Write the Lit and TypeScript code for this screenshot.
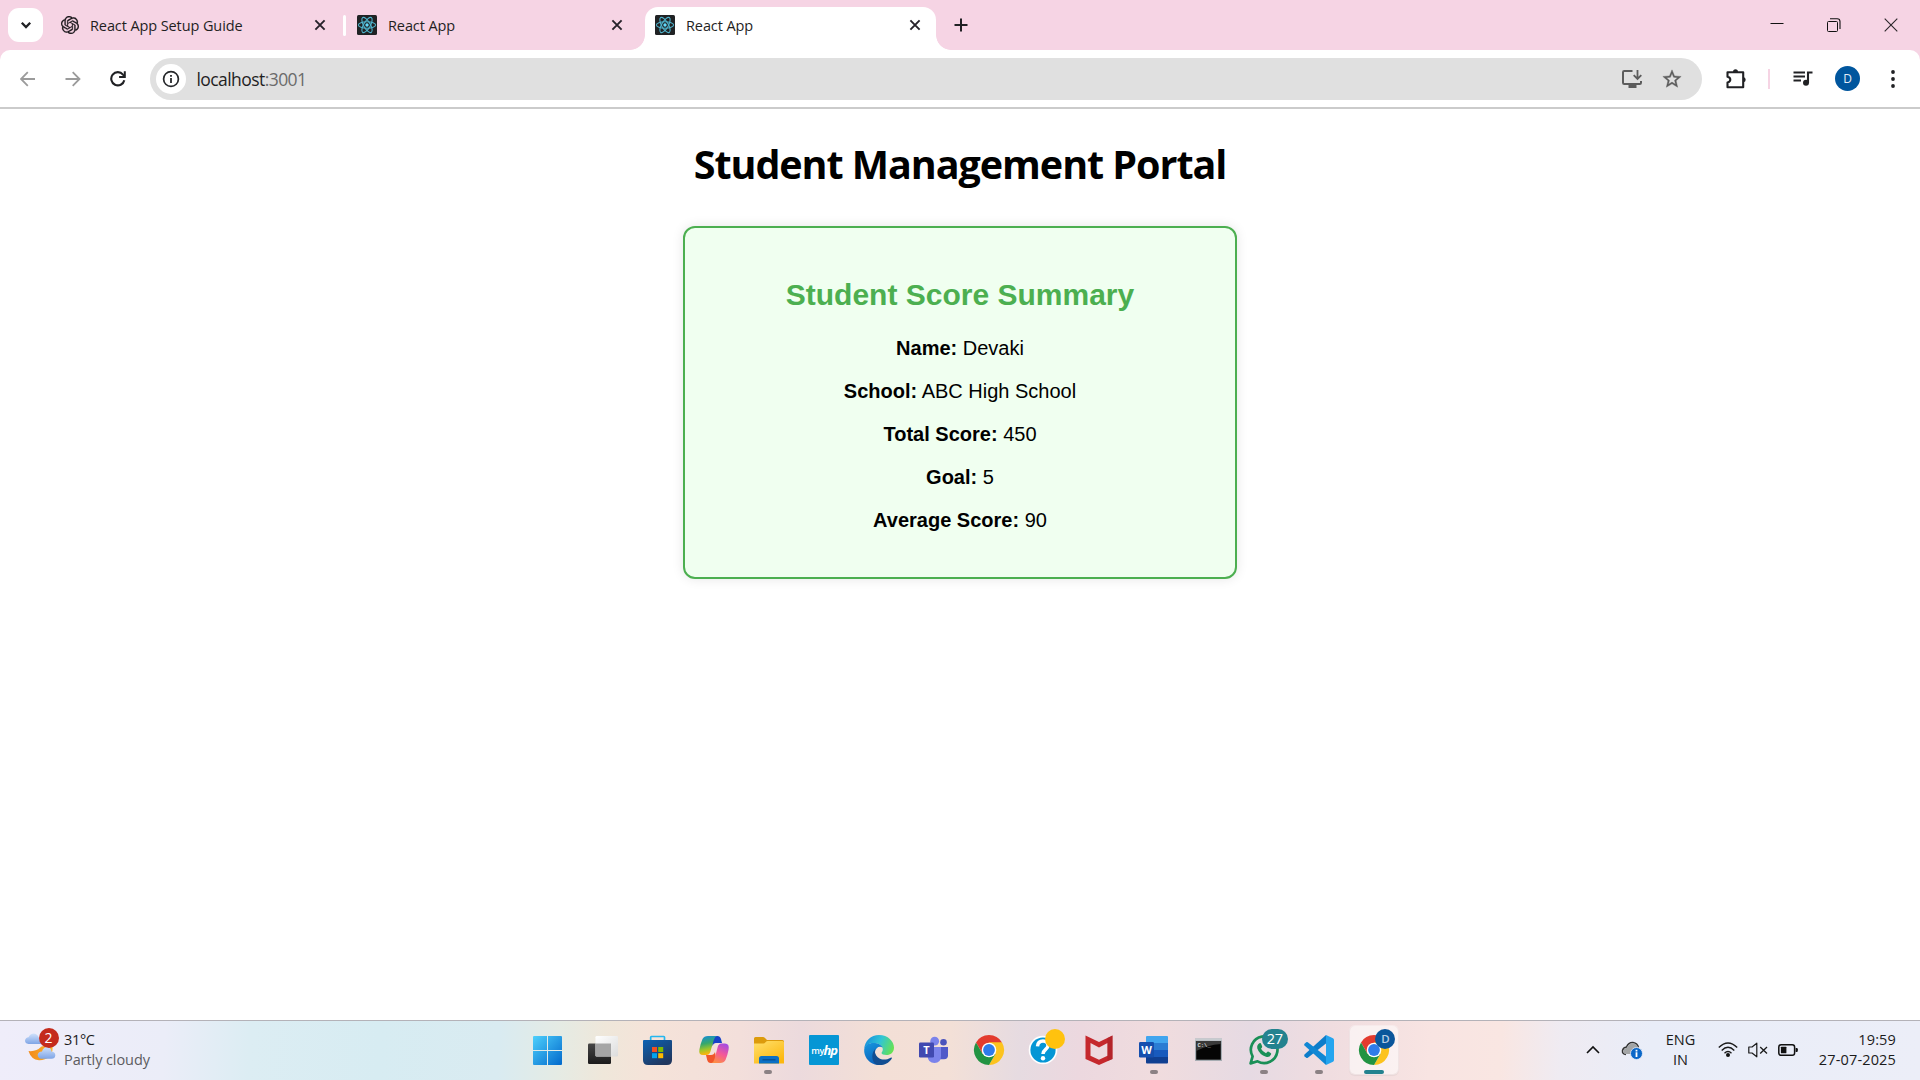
import { LitElement, html, svg, css, type TemplateResult } from "lit";
import { customElement } from "lit/decorators.js";
import { classMap } from "lit/directives/class-map.js";

const box = (size: number, body: TemplateResult, view = `0 0 ${size} ${size}`) =>
  html`<svg width=${size} height=${size} viewBox=${view} fill="none">${body}</svg>`;

/* ---------- browser icons ---------- */
const closeIcon = box(12, svg`<path d="M1.4 1.4 10.6 10.6M10.6 1.4 1.4 10.6" stroke="#26222a" stroke-width="1.9"/>`);

const gptIcon = box(18, svg`<path fill="#1c191d" stroke="#1c191d" stroke-width=".3" d="M22.2819 9.8211a5.9847 5.9847 0 0 0-.5157-4.9108 6.0462 6.0462 0 0 0-6.5098-2.9A6.0651 6.0651 0 0 0 4.9807 4.1818a5.9847 5.9847 0 0 0-3.9977 2.9 6.0462 6.0462 0 0 0 .7427 7.0966 5.98 5.98 0 0 0 .511 4.9107 6.051 6.051 0 0 0 6.5146 2.9001A5.9847 5.9847 0 0 0 13.2599 24a6.0557 6.0557 0 0 0 5.7718-4.2058 5.9894 5.9894 0 0 0 3.9977-2.9001 6.0557 6.0557 0 0 0-.7475-7.0729zm-9.022 12.6081a4.4755 4.4755 0 0 1-2.8764-1.0408l.1419-.0804 4.7783-2.7582a.7948.7948 0 0 0 .3927-.6813v-6.7369l2.02 1.1686a.071.071 0 0 1 .038.052v5.5826a4.504 4.504 0 0 1-4.4945 4.4944zm-9.6607-4.1254a4.4708 4.4708 0 0 1-.5346-3.0137l.142.0852 4.783 2.7582a.7712.7712 0 0 0 .7806 0l5.8428-3.3685v2.3324a.0804.0804 0 0 1-.0332.0615L9.74 19.9502a4.4992 4.4992 0 0 1-6.1408-1.6464zM2.3408 7.8956a4.485 4.485 0 0 1 2.3655-1.9728V11.6a.7664.7664 0 0 0 .3879.6765l5.8144 3.3543-2.0201 1.1685a.0757.0757 0 0 1-.071 0l-4.8303-2.7865A4.504 4.504 0 0 1 2.3408 7.872zm16.5963 3.8558L13.1038 8.364 15.1192 7.2a.0757.0757 0 0 1 .071 0l4.8303 2.7913a4.4944 4.4944 0 0 1-.6765 8.1042v-5.6772a.79.79 0 0 0-.407-.667zm2.0107-3.0231l-.142-.0852-4.7735-2.7818a.7759.7759 0 0 0-.7854 0L9.409 9.2297V6.8974a.0662.0662 0 0 1 .0284-.0615l4.8303-2.7866a4.4992 4.4992 0 0 1 6.6802 4.66zM8.3065 12.863l-2.02-1.1638a.0804.0804 0 0 1-.038-.0567V6.0742a4.4992 4.4992 0 0 1 7.3757-3.4537l-.142.0805L8.704 5.459a.7948.7948 0 0 0-.3927.6813zm1.0976-2.3654l2.602-1.4998 2.6069 1.4998v2.9994l-2.5974 1.4997-2.6067-1.4997Z"/>`, "0 0 24 24");

const reactIcon = box(20, svg`<rect width="20" height="20" rx="1.5" fill="#202224"/>
  <g stroke="#4fb4cd" stroke-width="1.1"><ellipse cx="10" cy="10" rx="8.6" ry="3.3"/>
  <ellipse cx="10" cy="10" rx="8.6" ry="3.3" transform="rotate(60 10 10)"/>
  <ellipse cx="10" cy="10" rx="8.6" ry="3.3" transform="rotate(120 10 10)"/></g><circle cx="10" cy="10" r="1.7" fill="#61dafb"/>`);

const chevron = box(12, svg`<path d="M1.8 3.8 6 8 10.2 3.8" stroke="#202124" stroke-width="2.3"/>`);
const plusIcon = box(14, svg`<path d="M7 .5V13.5M.5 7H13.5" stroke="#202124" stroke-width="2"/>`);
const minIcon = box(14, svg`<path d="M.5 5.5H13.5" stroke="#111" stroke-width="1"/>`);
const restoreIcon = box(14, svg`<rect x=".5" y="3.5" width="10" height="10" rx="1" stroke="#111"/><path d="M3 .8h7.2Q13 .8 13 3.6V11" stroke="#111" stroke-width="1.1"/>`);
const winClose = box(14, svg`<path d="M.7.7 13.3 13.3M13.3.7.7 13.3" stroke="#2a2529" stroke-width="1.1"/>`);

const backIcon = box(16, svg`<path d="M15 8H1.500M7.800 1.200 1 8l6.800 6.800" stroke="#9b9b9b" stroke-width="1.8"/>`);
const fwdIcon = box(16, svg`<path d="M.5 8H14M7.7 1.2 14.5 8l-6.8 6.8" stroke="#9b9b9b" stroke-width="1.8"/>`);
const reloadIcon = box(16, svg`<path d="M14.3 9.2A6.6 6.6 0 1 1 13 3.6L14.6 5.4" stroke="#202124" stroke-width="2.1"/><path d="M15.8.3V7H9.1V5h4.7V.3Z" fill="#202124"/>`);
const infoIcon = box(18, svg`<circle cx="9" cy="9" r="7.4" stroke="#26282b" stroke-width="1.7"/><path d="M8.1 8H9.9V13H8.1ZM8.1 5H9.9V6.8H8.1Z" fill="#26282b"/>`);
const installIcon = box(22, svg`<path d="M11.5 3H3.2Q2 3 2 4.2V14.8Q2 16 3.2 16H18.8Q20 16 20 14.8V13" stroke="#5c5c5c" stroke-width="2"/><path d="M7.5 16.5h8V20h-8Z" fill="#5c5c5c"/><path d="M16.5 2v8.5M12.7 7.2l3.8 3.8 3.8-3.8" stroke="#5c5c5c" stroke-width="1.8"/>`);
const starIcon = box(22, svg`<path fill="#5c5c5c" stroke="#5c5c5c" stroke-width=".4" d="m22 9.24-7.19-.62L12 2 9.19 8.63 2 9.24l5.46 4.73L5.82 21 12 17.27 18.18 21l-1.63-7.03L22 9.24zM12 15.4l-3.76 2.27 1-4.28-3.32-2.88 4.38-.38L12 6.1l1.71 4.04 4.38.38-3.32 2.88 1 4.28L12 15.4z"/>`, "0 0 24 24");
const puzzleIcon = box(22, svg`<path d="M4 4.2H18.2V19.2H2.5V14.5Q5.3 14 5.3 11.6T2.5 8.7V4.2Z" stroke="#202124" stroke-width="2.1" stroke-linejoin="round"/><path d="M8 4a2.5 2.8 0 0 1 5 0ZM18.5 9a2.7 2.7 0 0 1 0 5.3Z" fill="#202124"/>`);
const musicIcon = box(20, svg`<path d="M.5 3.5H12M.5 7.5H12M.5 11.5H8" stroke="#202124" stroke-width="2"/><circle cx="13" cy="13.8" r="3" fill="#202124"/><path d="M15 14V3.5H19.5" stroke="#202124" stroke-width="2.1"/>`);
const dotsIcon = box(20, svg`<g fill="#202124"><circle cx="10" cy="3" r="1.9"/><circle cx="10" cy="10" r="1.9"/><circle cx="10" cy="17" r="1.9"/></g>`);

/* ---------- taskbar icons ---------- */
const chromeBody = svg`<path d="M2 7.5A15 15 0 0 1 28 7.5L15 12 8.5 18.75Z" fill="#e33b2e"/>
  <path d="M28 7.5A15 15 0 0 1 15 30L21.5 18.75 15 7.5Z" fill="#fcc31e"/>
  <path d="M15 30A15 15 0 0 1 2 7.5L8.5 18.75 21.5 18.75Z" fill="#229342"/>
  <path d="M15 7.5H28L20 12Z" fill="#fcc31e"/>
  <circle cx="15" cy="15" r="7.3" fill="#fff"/><circle cx="15" cy="15" r="5.9" fill="#2f7bea"/>`;

const windowsIcon = box(30, svg`<defs><linearGradient id="g" x1="0" y1="0" x2="30" y2="30" gradientUnits="userSpaceOnUse"><stop stop-color="#4fd2fd"/><stop offset="1" stop-color="#0067cb"/></linearGradient></defs>
  <path fill="url(#g)" d="M0 2Q0 1 1 1H14V15H0ZM15 1H28Q29 1 29 2V15H15ZM0 16H14V30H1Q0 30 0 29ZM15 16H29V29Q29 30 28 30H15Z"/>`);

const taskViewIcon = box(30, svg`<defs><linearGradient id="d" x2="0" y2="1"><stop stop-color="#464646"/><stop offset="1" stop-color="#1b1b1b"/></linearGradient><linearGradient id="l" x2="1" y2="1"><stop stop-color="#fff"/><stop offset="1" stop-color="#dcdcdc"/></linearGradient></defs>
  <rect x="0" y="8.5" width="23" height="20.5" rx="1.2" fill="url(#d)"/><rect x="7.5" y="1" width="22.5" height="20.5" rx="1.2" fill="url(#l)"/>
  <path d="M7.5 8.5H23V21.5H8.7Q7.5 21.5 7.5 20.3Z" fill="#a5a5a5"/>`);

const storeIcon = box(30, svg`<defs><linearGradient id="s" x2=".6" y2="1"><stop stop-color="#0b62b4"/><stop offset="1" stop-color="#20375f"/></linearGradient></defs>
  <path d="M7.7 6V2.2Q7.7 1.5 8.4 1.5H20.8Q21.5 1.5 21.5 2.2V6" stroke="#25b7f0" stroke-width="1.7"/>
  <path d="M0 6Q0 5 1 5H28Q29 5 29 6V25Q29 30 24 30H5Q0 30 0 25Z" fill="url(#s)"/>
  <path fill="#f25022" d="M9 12h5v5H9Z"/><path fill="#7fba00" d="M15.2 12h5v5h-5Z"/><path fill="#00a4ef" d="M9 18.2h5v5H9Z"/><path fill="#ffb900" d="M15.2 18.2h5v5h-5Z"/>`);

const copilotIcon = box(30, svg`<defs><linearGradient id="a" x2=".2" y2="1"><stop stop-color="#128be0"/><stop offset=".45" stop-color="#37a86b"/><stop offset=".75" stop-color="#9fc52a"/><stop offset="1" stop-color="#fcb40c"/></linearGradient>
  <linearGradient id="b" x1=".7" x2=".3" y2="1"><stop stop-color="#a64be0"/><stop offset=".5" stop-color="#f4589a"/><stop offset="1" stop-color="#fd8e45"/></linearGradient></defs>
  <path d="M12 1H18.5Q21 1 22 4L23 8H17Q14.5 8 13.5 11Z" fill="#1743c8"/>
  <path d="M18 28H11.5Q9 28 8.2 25L7 20H12Q15 20 16 17Z" fill="#f0562b"/>
  <path d="M9 1H18Q15.8 1.5 14.8 5L11.3 17Q10.3 20 7.5 20H4Q-.6 20 .4 14.5 1.5 8.5 3.5 4 5 1 9 1Z" fill="url(#a)"/>
  <path d="M21 28H12.5Q14.5 27.5 15.5 24L18.7 12Q19.5 8.5 22.5 8.5H26Q30.6 8.5 29.6 14.5 28.5 20.5 26.5 25 25 28 21 28Z" fill="url(#b)"/>`, "-1 0 30 30");

const folderIcon = box(30, svg`<defs><linearGradient id="f" x2=".7" y2="1"><stop stop-color="#ffe06d"/><stop offset="1" stop-color="#fcb80f"/></linearGradient></defs>
  <path d="M0 3.5Q0 2 1.5 2H9Q10 2 11 3L13 5H28.5Q30 5 30 6.5V12H0Z" fill="#dc9b0c"/>
  <path d="M0 8.5H9.5Q10.5 8.5 11.5 7.3 12.5 6 13.7 6H28.5Q30 6 30 7.5V28.5H0Z" fill="url(#f)"/>
  <path d="M5 28.5V23.5Q5 21 7.5 21H22.5Q25 21 25 23.5V28.5Z" fill="#0b70c5"/><path d="M8.5 24.8H21.5" stroke="#064b8c" stroke-width="1.2"/>`, "-1 0 30 30");

const hpIcon = box(30, svg`<rect width="30" height="30" rx="1" fill="#0596d5"/><text x="2.2" y="18.7" class="my">my</text><text x="14.5" y="19.5" class="hp">hp</text>`);

const edgeIcon = box(30, svg`<defs><linearGradient id="e1" x1="0" y1=".3" x2="1" y2=".6"><stop stop-color="#168fdd"/><stop offset=".5" stop-color="#31c5d5"/><stop offset="1" stop-color="#67e252"/></linearGradient>
  <linearGradient id="e2" x2=".4" y2="1"><stop stop-color="#1797df"/><stop offset="1" stop-color="#0b62bb"/></linearGradient></defs>
  <path d="M.2 14.5C.6 5.5 7 0 15 0 24 0 30 6.5 30 12.5 30 17.5 26.5 20 22.5 20 19.5 20 17.5 19 17.5 18 17.5 17.3 18.8 16.5 18.8 14.3 18.8 10.5 14.5 8 9.5 8 4.5 8 1 11 .2 14.5Z" fill="url(#e1)"/>
  <path d="M.2 14.5C1 10 4.5 8 9.5 8 14 8 17.5 10 18.5 12.5 15.5 10.5 11.5 12.5 11 17 10.5 22.5 15 27.5 20 28.8 17 30 14 30.3 11 29.5 4 27.5-.3 21 .2 14.5Z" fill="url(#e2)"/>
  <path d="M12.5 13C10.5 14.5 10.5 17 11.5 19 13.5 24 20 26.5 26.7 22.7 27.5 22.3 28.2 23 27.7 23.8 24 29.5 17.5 31 12 29.5 7.5 26.5 6.5 17 12.5 13Z" fill="#114e92"/>`);

const teamsIcon = box(30, svg`<circle cx="24.5" cy="7.3" r="3.3" fill="#4b53bc"/><path d="M20 12H29V20.5Q29 24.2 25 24.2H20Z" fill="#5059c9"/>
  <circle cx="15.7" cy="6.2" r="4.4" fill="#7b83eb"/><path d="M8.5 12H22V21Q22 28 15.5 28T8.5 21Z" fill="#7b83eb"/>
  <rect x="0" y="7.5" width="15" height="15" rx="1.3" fill="#4149b0"/><text x="7.5" y="19" class="t">T</text>`);

const chromeIcon = box(30, chromeBody);

const helpIcon = box(30, svg`<circle cx="14" cy="15" r="14.3" fill="#fff"/><circle cx="14" cy="15" r="12.6" fill="#0596d5"/><path d="M8.5 11.3Q9 6 14 6T19 10.5C19 14.5 14 14.3 14 19" stroke="#fff" stroke-width="3.5"/><circle cx="14" cy="23.2" r="2.2" fill="#fff"/>`);

const mcafeeIcon = box(30, svg`<path d="M1.5.5 15 7 28.5.5V24L15 30 1.5 24ZM6.5 8V20.7L15 24.7 23.5 20.7V8L15 12.5Z" fill="#c5282d" fill-rule="evenodd"/><path d="M23.5 3 28.5.5V24L23.5 26Z" fill="#a82228" opacity=".6"/>`);

const wordIcon = box(30, svg`<path d="M7 2Q7 1 8 1H28Q29 1 29 2V8H7Z" fill="#41a5ee"/><path d="M7 8H29V15H7Z" fill="#2b7cd3"/><path d="M7 15H29V22H7Z" fill="#185abd"/><path d="M7 22H29V27.5Q29 28.5 28 28.5H8Q7 28.5 7 27.5Z" fill="#103f91"/>
  <rect x="0" y="7" width="15" height="15.5" rx="1.3" fill="#154fae"/><text x="7.5" y="19" class="t">W</text>`);

const cmdIcon = box(30, svg`<rect x="1.5" y="3.5" width="27" height="22.5" fill="#a7adb3"/><rect x="2.7" y="6" width="24.6" height="18.7" fill="#050505"/><path d="M2.7 6H27.3V9Q14 10 2.7 16Z" fill="#3a3a3a"/><path d="M1.5 3.5H28.5V5.7H1.5Z" fill="#c7ccd0"/><text x="4" y="12" class="prompt">C:\\_</text>`, "0.5 0 30 30");

const whatsappIcon = box(30, svg`<path d="M1.6 28.4 3.6 21.3A13.3 13.3 0 1 1 8.6 26.3Z" stroke="#1a8f57" stroke-width="2.7" stroke-linejoin="round"/>
  <path d="M10.3 8.3Q11.6 7.5 12.2 9L13.2 11.5Q13.4 12.2 12 13.7 13.7 16.8 17 18.2 18.5 16.3 19.2 16.6L21.7 17.9Q22.5 18.4 21.9 19.8 20.5 22.7 17 21.8 10.5 19.7 8.3 13.5 7.6 10 10.3 8.3Z" fill="#1a8f57"/>`);

const codeIcon = box(30, svg`<path d="M22 0 .5 19.6Q-.2 20.4.5 21.2L2.2 22.7Q3 23.3 3.8 22.7L22 8.5Z" fill="#0d7dca"/>
  <path d="M22 30 .5 10.4Q-.2 9.6.5 8.8L2.2 7.3Q3 6.7 3.8 7.3L22 21.5Z" fill="#1087d4"/><path d="M22 0 29 3.2Q30 3.7 30 5V25Q30 26.3 29 26.8L22 30Z" fill="#25a5ef"/>`);

const weatherIcon = html`<svg width="32" height="30" viewBox="0 0 32 30" fill="none">
  <defs><linearGradient id="c" x2="0" y2="1"><stop stop-color="#cfe1fb"/><stop offset="1" stop-color="#7fa5e6"/></linearGradient><linearGradient id="m" x2="1" y2="0"><stop stop-color="#f28a1c"/><stop offset="1" stop-color="#fbb52b"/></linearGradient></defs>
  <path d="M3.5 16Q11 17 16.5 11.5L27 9.5Q29 17 24.5 21.5 20 25.5 14 25.3 6 24.500 3.5 16Z" fill="url(#m)"/>
  <path d="M3.5 9Q0 8.5 0 5.5.5 2.5 3.5 2.3 5-1.5 9-1.5 12.5-1 13.5 2L18 9Z" fill="url(#c)"/>
  <path d="M16 23.7Q12.5 23 12.7 19.5 13.5 16.5 17 16.5 18.5 11.5 22.5 12 26 12.5 26.5 16.5 30.5 17 30.3 20.5 30 23.7 26.5 23.7Z" fill="url(#c)"/></svg>`;

/* ---------- tray icons ---------- */
const upIcon = box(14, svg`<path d="M1 10 7 4l6 6" stroke="#111" stroke-width="1.6"/>`);
const cloudIcon = box(22, svg`<path d="M5 15.5Q1 15 1.5 11.5 2.2 8.5 5.5 8 7.5 3.2 12 3.5 16.5 4.2 17.5 8.5" stroke="#333" stroke-width="1.5"/><path d="M5 15Q2 14.5 2.2 11.5 3 9 6 8.7 8 4 12 4.3 16.5 5 17 9L12 15Z" fill="#a3a5a6"/><circle cx="15.5" cy="14.5" r="6" fill="#0a67c8" stroke="#eceef8" stroke-width=".8"/><path d="M14.6 13.3h1.8V18h-1.8ZM14.6 10.8h1.8v1.6h-1.8Z" fill="#fff"/>`);
const wifiIcon = box(20, svg`<g stroke="#1a1a1a" stroke-width="1.4"><path d="M.8 7.5Q10-1.5 19.2 7.5M3.7 10.4Q10 4.2 16.3 10.4M6.5 13.2Q10 9.8 13.5 13.2"/></g><circle cx="10" cy="15" r="2" fill="#111"/>`);
const muteIcon = box(20, svg`<path d="M.8 7H4L8.8 3.2V16.8L4 13H.8Z" stroke="#1a1a1a" stroke-width="1.2" stroke-linejoin="round"/><path d="M12.2 7 19 13.5M19 7 12.2 13.5" stroke="#1a1a1a" stroke-width="1.3"/>`);
const batteryIcon = box(20, svg`<rect x=".8" y="4.7" width="15.8" height="10.6" rx="2.3" stroke="#111" stroke-width="1.5"/><rect x="2.9" y="6.7" width="5.5" height="6.6" rx=".6" fill="#111"/><path d="M17.6 8h1q1.2 0 1.2 1.2v1.6q0 1.2-1.2 1.2h-1Z" fill="#111"/>`);

interface TabInfo { title: string; icon: TemplateResult; cls: string; }
const TABS: TabInfo[] = [
  { title: "React App Setup Guide", icon: gptIcon, cls: "first" },
  { title: "React App", icon: reactIcon, cls: "second" },
  { title: "React App", icon: reactIcon, cls: "active" },
];

@customElement("browser-chrome")
export class BrowserChrome extends LitElement {
  static styles = css`
    :host { display: block; font-family: "Open Sans", "Noto Sans", sans-serif; color: #1f1f1f; background: #f6d4e4; }
    svg { display: block; flex: none; }
    .strip { height: 50px; display: flex; align-items: stretch; }
    .search { width: 35px; height: 34px; margin: 8px 0 0 8px; border-radius: 11px; background: #fff; display: grid; place-items: center; }
    .tab { box-sizing: border-box; display: flex; align-items: center; font-size: 14.5px; letter-spacing: -0.1px; white-space: nowrap; }
    .title { flex: 1; }
    .first { width: 282px; margin-left: 18px; gap: 11px; }
    .first .title { width: 213px; flex: none; }
    .second { width: 266px; margin-left: 12px; gap: 11px; }
    .sep { width: 3px; height: 21px; border-radius: 1.5px; background: #fff; align-self: center; margin-left: 0; margin-right: -1px; }
    .active { position: relative; width: 291px; height: 43px; margin: 7px 0 0 22px; padding: 0 15px 7px 10px; gap: 11px; background: #fff; border-radius: 13px 13px 0 0; }
    .active::before, .active::after { content: ""; position: absolute; bottom: 0; width: 15px; height: 15px; }
    .active::before { left: -15px; background: radial-gradient(circle at 0 0, transparent 14.5px, #fff 15.2px); }
    .active::after { right: -15px; background: radial-gradient(circle at 100% 0, transparent 14.5px, #fff 15.2px); }
    .plus { display: flex; align-items: center; margin-left: 18px; }
    .win { margin-left: auto; display: flex; align-items: center; gap: 43px; padding-right: 22px; padding-bottom: 1px; }
    .bar { height: 57px; background: #fff; border-radius: 10px 10px 0 0; border-bottom: 2px solid #cbcbcb; display: flex; align-items: center; }
    .nav { display: flex; gap: 29px; padding-left: 20px; width: 130px; }
    .omni { width: 1552px; height: 42px; box-sizing: border-box; border-radius: 21px; background: #e0e0e0; display: flex; align-items: center; padding: 0 19px 0 6px; }
    .info { width: 30px; height: 30px; border-radius: 50%; background: #fff; display: grid; place-items: center; }
    .url { flex: 1; margin-left: 10.5px; font-size: 17.5px; letter-spacing: -0.57px; }
    .port { color: #6b6b6b; }
    .omni-actions { display: flex; gap: 18px; }
    .tools { display: flex; align-items: center; margin-left: 23px; }
    .rule { width: 2px; height: 20px; background: #f6d4e4; margin: 0 23px 0 21px; }
    .avatar { width: 25px; height: 25px; border-radius: 50%; background: #00569e; color: #e5eef8; font-size: 12px; display: grid; place-items: center; margin: 0 22.5px 0 22px; }
  `;

  render() {
    return html`
      <div class="strip">
        <div class="search">${chevron}</div>
        ${TABS.map((t, i) => html`
          <div class=${classMap({ tab: true, [t.cls]: true })}>${t.icon}<span class="title">${t.title}</span>${closeIcon}</div>
          ${i === 0 ? html`<div class="sep"></div>` : null}`)}
        <div class="plus">${plusIcon}</div>
        <div class="win">${minIcon}${restoreIcon}${winClose}</div>
      </div>
      <div class="bar">
        <div class="nav">${backIcon}${fwdIcon}${reloadIcon}</div>
        <div class="omni">
          <div class="info">${infoIcon}</div>
          <div class="url">localhost<span class="port">:3001</span></div>
          <div class="omni-actions">${installIcon}${starIcon}</div>
        </div>
        <div class="tools">${puzzleIcon}<div class="rule"></div>${musicIcon}<div class="avatar">D</div>${dotsIcon}</div>
      </div>`;
  }
}

const SCORES: [string, string][] = [
  ["Name", "Devaki"],
  ["School", "ABC High School"],
  ["Total Score", "450"],
  ["Goal", "5"],
  ["Average Score", "90"],
];

@customElement("student-portal")
export class StudentPortal extends LitElement {
  static styles = css`
    :host { display: block; background: #fff; color: #000; text-align: center; }
    h1 { margin: 0; padding-top: 29px; font: 700 39.5px/53px "Open Sans", "Noto Sans", sans-serif; letter-spacing: -1.05px; }
    .card { box-sizing: border-box; width: 554px; height: 353px; margin: 35px auto 0; padding: 25px; border: 2px solid #4caf50; border-radius: 12px; background: #f0fff0; box-shadow: 0 0 12px rgba(0, 0, 0, 0.1); font-family: "Liberation Sans", Arial, sans-serif; }
    h2 { margin: 25px 0; font-size: 30px; line-height: 34px; color: #4caf50; }
    p { margin: 20px 0; font-size: 20px; line-height: 23px; }
    h2 + p { margin-top: 0; }
  `;

  render() {
    return html`
      <h1>Student Management Portal</h1>
      <section class="card">
        <h2>Student Score Summary</h2>
        ${SCORES.map(([k, v]) => html`<p><strong>${k}:</strong> ${v}</p>`)}
      </section>`;
  }
}

interface App { icon: TemplateResult; running?: boolean; active?: boolean; badge?: TemplateResult; }
const APPS: App[] = [
  { icon: windowsIcon },
  { icon: taskViewIcon },
  { icon: storeIcon },
  { icon: copilotIcon },
  { icon: folderIcon, running: true },
  { icon: hpIcon },
  { icon: edgeIcon },
  { icon: teamsIcon },
  { icon: chromeIcon },
  { icon: helpIcon, badge: html`<span class="badge dot"></span>` },
  { icon: mcafeeIcon },
  { icon: wordIcon, running: true },
  { icon: cmdIcon },
  { icon: whatsappIcon, running: true, badge: html`<span class="badge count">27</span>` },
  { icon: codeIcon, running: true },
  { icon: chromeIcon, active: true, badge: html`<span class="badge user">D</span>` },
];

@customElement("task-bar")
export class TaskBar extends LitElement {
  static styles = css`
    :host { box-sizing: border-box; display: flex; height: 60px; border-top: 1px solid #b4b2b8; font-family: "Open Sans", "Noto Sans", sans-serif; font-size: 14.5px; line-height: 20px; letter-spacing: -0.08px; color: #1b1b1b;
      background: linear-gradient(93deg, #efedfa 0, #ebedf8 165px, #dcedf3 250px, #d7ecf2 380px, #d9ebf1 500px, #e5ebe4 560px, #efe7da 605px, #f5e3d9 650px, #f3dfdb 740px, #ecdadd 800px, #f3dfd6 880px, #f3e0d7 950px, #e6dbe1 1020px, #ecd8df 1080px, #f0dcde 1160px, #e6dae3 1250px, #f0dde0 1330px, #f8e4e2 1430px, #f9e6e2 1500px, #efebf2 1560px, #e9edf8 1650px, #eceef8 1920px); }
    svg { display: block; flex: none; overflow: visible; }
    .weather { box-sizing: border-box; width: 520.5px; padding: 9px 0 0 25px; display: flex; gap: 7px; }
    .temp { letter-spacing: -0.35px; }
    .sky { position: relative; padding-top: 5px; }
    .muted { color: #5c5c60; }
    .alert { position: absolute; left: 13.5px; top: -2px; width: 20px; height: 20px; border-radius: 50%; background: #c42b1c; color: #fff; text-align: center; font-size: 14px; }
    .apps { display: grid; grid-template-columns: repeat(16, 55.1px); height: 58px; }
    .app { position: relative; display: grid; place-items: center; }
    .tile { box-sizing: border-box; width: 48px; height: 48px; display: grid; place-items: center; border-radius: 5px; }
    .on .tile { background: rgba(255, 255, 255, 0.55); box-shadow: 0 0 0 1px rgba(255, 255, 255, 0.35), 0 1px 1px 1px rgba(0, 0, 0, 0.05); }
    .app::after { content: ""; position: absolute; bottom: 5px; left: 50%; transform: translateX(-50%); height: 4px; border-radius: 2px; }
    .run::after { width: 8px; background: #8b8184; }
    .on::after { width: 20px; background: #23828f; }
    .badge { position: absolute; height: 20px; border-radius: 10px; text-align: center; }
    .dot { left: 28.5px; top: 8px; width: 20px; background: #ffc20e; }
    .count { left: 25px; top: 8px; width: 26px; background: #23828f; color: #fff; font-size: 14.5px; letter-spacing: -0.35px; }
    .user { left: 28.5px; top: 8px; width: 20px; background: #0a569b; color: #b9cde4; font-size: 11.5px; font-weight: 600; }
    .my { font: 600 9px "Open Sans", sans-serif; fill: #fff; letter-spacing: -0.2px; }
    .hp { font: italic 700 13px "Open Sans", sans-serif; fill: #fff; letter-spacing: -1.2px; }
    .t { font: 700 11px "Open Sans", sans-serif; fill: #fff; text-anchor: middle; letter-spacing: 0; }
    .prompt { font: 700 5.5px "Liberation Mono", monospace; fill: #ddd; letter-spacing: 0; }
    .tray { flex: 1; height: 58px; display: flex; align-items: center; }
    .up { margin-left: 184px; }
    .cloud { margin-left: 21px; }
    .lang { width: 56px; text-align: center; margin-left: 9.5px; letter-spacing: 0; }
    .status { display: flex; gap: 10px; margin-left: 9px; }
    .clock { margin-left: auto; padding-right: 24px; text-align: right; letter-spacing: 0.15px; }
    .lang, .clock { padding-bottom: 1px; }
  `;

  render() {
    return html`
      <div class="weather">
        <div class="sky">${weatherIcon}<span class="alert">2</span></div>
        <div><div class="temp">31°C</div><div class="muted">Partly cloudy</div></div>
      </div>
      <div class="apps">
        ${APPS.map((a) => html`
          <div class=${classMap({ app: true, run: !!a.running, on: !!a.active })}>
            <div class="tile">${a.icon}</div>${a.badge}
          </div>`)}
      </div>
      <div class="tray">
        <div class="up">${upIcon}</div>
        <div class="cloud">${cloudIcon}</div>
        <div class="lang">ENG<br />IN</div>
        <div class="status">${wifiIcon}${muteIcon}${batteryIcon}</div>
        <div class="clock">19:59<br />27-07-2025</div>
      </div>`;
  }
}

@customElement("app-root")
export class AppRoot extends LitElement {
  static styles = css`
    :host { display: flex; flex-direction: column; width: 1920px; height: 1080px; overflow: hidden; background: #fff; }
    student-portal { flex: 1; }
  `;

  render() {
    return html`<browser-chrome></browser-chrome><student-portal></student-portal><task-bar></task-bar>`;
  }
}
